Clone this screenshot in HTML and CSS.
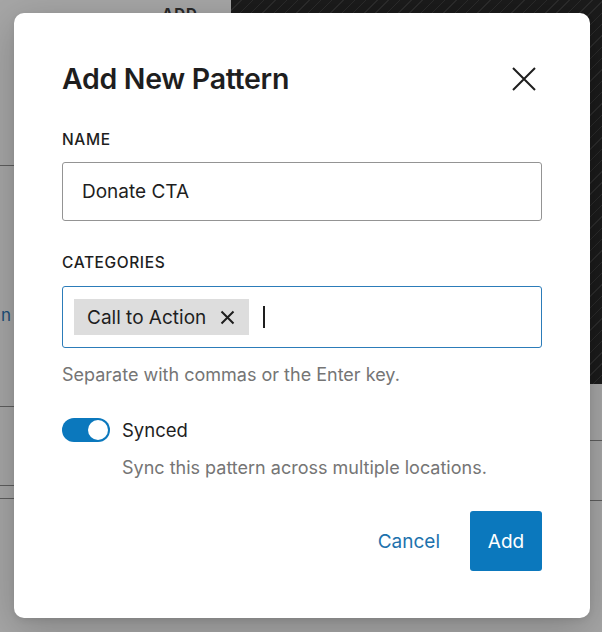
FILE: index.html
```html
<!DOCTYPE html>
<html lang="en">
<head>
<meta charset="utf-8">
<title>Add New Pattern</title>
<link rel="stylesheet" href="styles.css">
</head>
<body>
<div class="backdrop">
  <div class="bg-left">
    <div class="bg-row bg-row--top"><span class="bg-heading">ADD</span></div>
    <div class="bg-row bg-row--mid"><span class="bg-link">n</span></div>
    <div class="bg-row bg-row--short"></div>
    <div class="bg-row bg-row--thin"></div>
  </div>
  <div class="bg-right">
    <div class="bg-dark"></div>
    <div class="bg-row bg-row--r1"></div>
    <div class="bg-row bg-row--r2"></div>
  </div>
</div>

<div class="modal" role="dialog" aria-labelledby="modal-title">
  <div class="modal-header">
    <h1 class="modal-title" id="modal-title">Add New Pattern</h1>
    <button class="close-btn" aria-label="Close">
      <svg width="26" height="26" viewBox="0 0 26 26" aria-hidden="true">
        <path d="M2 2 L24 24 M24 2 L2 24" stroke="#1e1e1e" stroke-width="2" fill="none"/>
      </svg>
    </button>
  </div>

  <div class="field">
    <label class="field-label" for="name">Name</label>
    <div class="text-input"><span class="input-value">Donate CTA</span></div>
  </div>

  <div class="field field--categories">
    <label class="field-label">Categories</label>
    <div class="token-input">
      <span class="token">
        <span class="token-text">Call to Action</span>
        <svg class="token-x" width="15" height="15" viewBox="0 0 15 15" aria-hidden="true">
          <path d="M1.5 1.5 L13.5 13.5 M13.5 1.5 L1.5 13.5" stroke="#1e1e1e" stroke-width="2" fill="none"/>
        </svg>
      </span>
      <span class="caret"></span>
    </div>
    <p class="help">Separate with commas or the Enter key.</p>
  </div>

  <div class="toggle-row">
    <span class="toggle"><span class="toggle-knob"></span></span>
    <span class="toggle-label">Synced</span>
  </div>
  <p class="toggle-help">Sync this pattern across multiple locations.</p>

  <div class="actions">
    <button class="btn btn--tertiary">Cancel</button>
    <button class="btn btn--primary">Add</button>
  </div>
</div>
</body>
</html>
```

FILE: styles.css
```css
* { box-sizing: border-box; }

html, body {
  margin: 0;
  padding: 0;
  width: 602px;
  height: 632px;
  overflow: hidden;
}

body {
  font-family: Inter, "Noto Sans", "Liberation Sans", sans-serif;
  color: #1e1e1e;
  background: #a6a6a6;
  position: relative;
}

/* ---------- background (editor behind the overlay) ---------- */
.backdrop {
  display: grid;
  grid-template-columns: 231px 1fr;
  width: 602px;
  height: 632px;
  background: #a6a6a6;
}

.bg-left, .bg-right {
  display: flex;
  flex-direction: column;
}

.bg-row { border-bottom: 1px solid #5e5e5e; }
.bg-row--top { height: 166px; }
.bg-row--mid { height: 241px; padding-top: 139px; }
.bg-row--short { height: 79px; }
.bg-row--thin { height: 13px; }

.bg-heading {
  display: block;
  padding: 4px 0 0 162px;
  font-size: 15px;
  font-weight: 700;
  letter-spacing: 1px;
  color: #2a2a2a;
}

.bg-link {
  display: block;
  font-size: 17px;
  line-height: 20px;
  color: #1d4f78;
  margin-left: 1px;
}

.bg-dark {
  height: 384px;
  background-color: #1b1b1b;
  background-image: repeating-linear-gradient(135deg, #1b1b1b 0 7px, #2b2b2b 7px 8px);
}
.bg-row--r1 { height: 57px; }
.bg-row--r2 { height: 60px; }

/* ---------- modal ---------- */
.modal {
  position: absolute;
  left: 14px;
  top: 13px;
  width: 576px;
  height: 605px;
  background: #fff;
  border-radius: 10px;
  box-shadow: 0 10px 40px rgba(0, 0, 0, 0.22), 0 2px 6px rgba(0, 0, 0, 0.08);
  padding: 48px 48px 47px;
  display: flex;
  flex-direction: column;
}

.modal-header {
  display: flex;
  align-items: center;
  justify-content: space-between;
  height: 36px;
}

.modal-title {
  margin: 0;
  font-size: 28.5px;
  font-weight: 600;
  letter-spacing: -0.3px;
  line-height: 36px;
  color: #1e1e1e;
}

.close-btn {
  border: 0;
  background: none;
  padding: 0;
  margin-right: 5px;
  width: 26px;
  height: 26px;
  display: flex;
  cursor: pointer;
}

.field { margin-top: 33px; }
.field--categories { margin-top: 32px; }

.field-label {
  display: block;
  font-size: 15.5px;
  font-weight: 500;
  letter-spacing: 0.6px;
  text-transform: uppercase;
  line-height: 20px;
  color: #1e1e1e;
  margin-bottom: 12px;
}

.field--categories .field-label { margin-bottom: 13px; }

.text-input {
  height: 59px;
  border: 1px solid #949494;
  border-radius: 3px;
  display: flex;
  align-items: center;
  padding: 0 19px;
}

.input-value {
  font-size: 19px;
  color: #1e1e1e;
}

.token-input {
  height: 62px;
  border: 1.5px solid #2c7cb9;
  border-radius: 3px;
  display: flex;
  align-items: center;
  padding: 0 11px;
  gap: 14px;
}

.token {
  display: flex;
  align-items: center;
  height: 36px;
  background: #dddddd;
  padding: 0 14px 0 13px;
  gap: 14px;
}

.token-text { font-size: 19px; color: #1e1e1e; }
.token-x { display: block; }

.caret {
  width: 2px;
  height: 22px;
  background: #1e1e1e;
}

.help {
  margin: 16px 0 0;
  font-size: 18px;
  line-height: 22px;
  color: #757575;
}

.toggle-row {
  display: flex;
  align-items: center;
  gap: 12px;
  margin-top: 32px;
  height: 24px;
}

.toggle {
  width: 48px;
  height: 24px;
  border-radius: 12px;
  background: #0b78bd;
  display: flex;
  align-items: center;
  justify-content: flex-end;
  padding-right: 2px;
}

.toggle-knob {
  width: 20px;
  height: 20px;
  border-radius: 50%;
  background: #fff;
}

.toggle-label {
  font-size: 18.5px;
  color: #1e1e1e;
}

.toggle-help {
  margin: 15px 0 0 60px;
  font-size: 18px;
  line-height: 22px;
  color: #757575;
}

.actions {
  margin-top: auto;
  display: flex;
  justify-content: flex-end;
  align-items: center;
  gap: 18px;
}

.btn {
  font-family: inherit;
  font-size: 19px;
  border: 0;
  border-radius: 3px;
  height: 60px;
  cursor: pointer;
}

.btn--tertiary {
  background: none;
  color: #1d72ad;
  padding: 0 12px;
}

.btn--primary {
  background: #0b78bd;
  color: #fff;
  width: 72px;
  padding: 0;
}
```
